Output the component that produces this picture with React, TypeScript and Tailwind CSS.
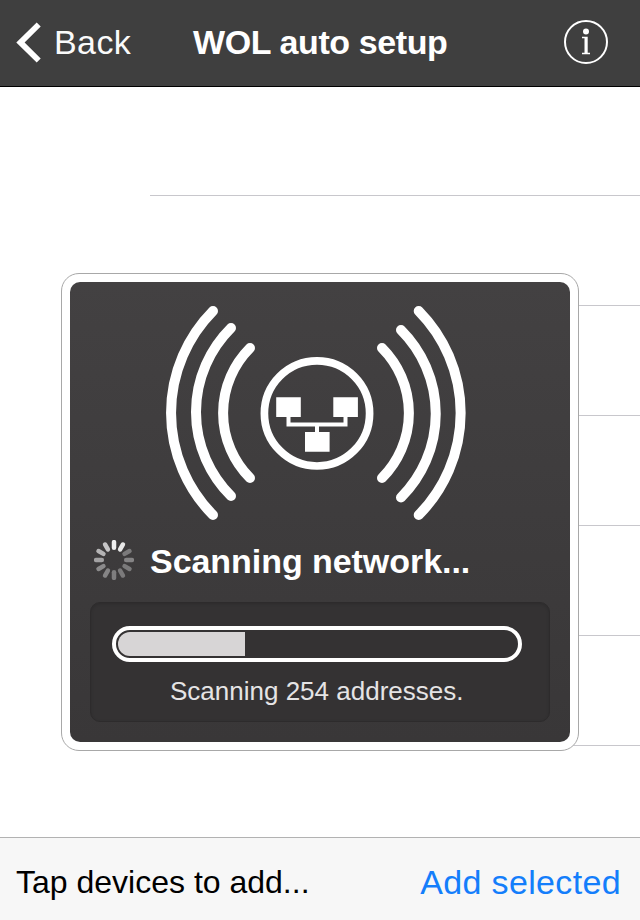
import React from "react";

const spokes = ["#f0f0f0", "#e8e8e8", "#7b7a7b", "#858485", "#7b7a7b", "#7b7a7b", "#7f7e7f", "#858485", "#8c8b8c", "#a3a2a3", "#b5b4b5", "#c6c5c6"];

function Spinner() {
  return (
    <svg className="size-10 shrink-0" viewBox="-20 -20 40 40">
      {spokes.map((color, i) => (
        <line key={i} x1="0" y1="-12.2" x2="0" y2="-17.9" stroke={color} strokeWidth="4.5" strokeLinecap="round" transform={`rotate(${i * 30})`} />
      ))}
    </svg>
  );
}

function NetworkWaves() {
  return (
    <svg className="block h-[240px] w-[500px]" viewBox="70 282 500 240" fill="none">
      <g stroke="#fff" strokeWidth="10" strokeLinecap="round">
        <path d="M213 311A145 145 0 0 0 213 515" />
        <path d="M231 328A118.3 118.3 0 0 0 231 496" />
        <path d="M250 348A92 92 0 0 0 250 478" />
        <path d="M382 348A92 92 0 0 1 382 478" />
        <path d="M401 330A118.3 118.3 0 0 1 401 497.5" />
        <path d="M418.7 311A145 145 0 0 1 418.7 515" />
      </g>
      <circle cx="317" cy="413.4" r="52.6" stroke="#fff" strokeWidth="7.7" />
      <path d="M288.5 417V424.5H345.5V417M317 424.5V433" stroke="#fff" strokeWidth="4" />
      <path d="M276.2 397.2h24.6v19.8h-24.6zM333.3 397.2h24.6v19.8h-24.6zM305 432h24.6v19.7h-24.6z" fill="#fff" />
    </svg>
  );
}

export default function App() {
  return (
    <div className="relative flex h-[920px] w-[640px] flex-col overflow-hidden bg-white font-['Liberation_Sans',Arial,sans-serif]">
      <header className="flex h-[87px] shrink-0 items-center border-b border-black bg-[#3f3f3f] pb-px text-[34px] leading-[40px] text-white">
        <button className="flex w-[193px] items-center">
          <svg className="ml-4 h-[42px] w-[26px]" viewBox="0 0 26 42" fill="none">
            <path d="M0.3 20.5L20.7 0.4L24.7 4.4L8.6 20.5L24.7 36.6L20.7 40.6Z" fill="#fff" />
          </svg>
          <span className="ml-3 pb-0.5 tracking-[0.4px] text-[#fafafa]">Back</span>
        </button>
        <h1 className="w-[254px] whitespace-nowrap pb-0.5 text-[34px] font-bold tracking-[-0.4px]">WOL auto setup</h1>
        <button className="ml-[117px] mt-[-1px] size-11" aria-label="Info">
          <svg className="size-11" viewBox="0 0 44 44" fill="none">
            <circle cx="22" cy="22" r="21" stroke="#fff" strokeWidth="2" />
            <circle cx="22" cy="11.5" r="3" fill="#fff" />
            <path d="M18 16.8h5.7v15.9h2.3v1.5h-8v-1.5h2.5V18.3H18z" fill="#fff" />
          </svg>
        </button>
      </header>

      <main className="flex h-[750px] shrink-0 flex-col pl-[150px]">
        <div className="h-[109px] shrink-0 border-b border-[#c8c7cc]" />
        {[0, 1, 2, 3, 4].map((row) => (
          <div key={row} className="h-[110px] shrink-0 border-b border-[#c8c7cc]" />
        ))}
      </main>

      <footer className="flex h-[83px] shrink-0 items-center justify-between border-t border-[#b2b2b2] bg-[#f7f7f7] pl-4 pr-[19px] pt-1.5">
        <span className="whitespace-nowrap text-[32px] leading-[40px] text-black">Tap devices to add...</span>
        <button className="whitespace-nowrap text-[34px] leading-[40px] tracking-[0.35px] text-[#147efb]">Add selected</button>
      </footer>

      <section className="absolute left-[61px] top-[273px] h-[478px] w-[518px] rounded-[18px] border border-[#a8a8a8] bg-white p-2">
        <div className="flex h-[460px] w-[500px] flex-col rounded-[10px] bg-linear-to-b from-[#434142] to-[#393738]">
          <NetworkWaves />
          <div className="flex h-[80px] shrink-0 items-center pl-6 pb-1">
            <Spinner />
            <h2 className="ml-4 mt-px whitespace-nowrap text-[34px] font-bold leading-[40px] tracking-[-0.05px] text-white">Scanning network...</h2>
          </div>
          <div className="ml-5 h-[120px] w-[460px] rounded-[10px] border border-[#2d2b2c] bg-[#343233] px-[21px] pt-[23px] shadow-[inset_0_1px_3px_rgba(0,0,0,0.15)]">
            <div className="h-9 w-[410px] rounded-full border-4 border-white p-[2px] pl-[1.5px]">
              <div className="h-6 w-[127.5px] rounded-l-full bg-[#d7d5d6]" />
            </div>
            <p className="mt-[14px] whitespace-nowrap pl-[58px] text-[26px] leading-[30px] text-[#e5e4e5]">Scanning 254 addresses.</p>
          </div>
        </div>
      </section>
    </div>
  );
}
